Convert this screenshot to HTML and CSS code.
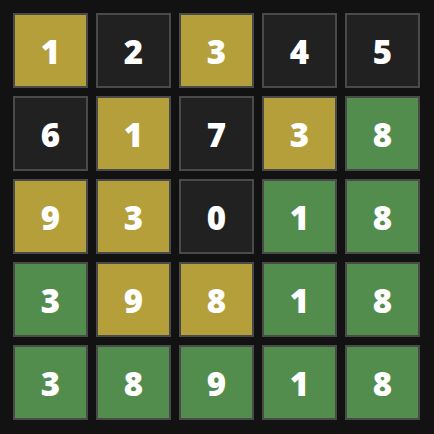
FILE: index.html
```html
<!DOCTYPE html>
<html>
<head>
<meta charset="utf-8">
<link rel="stylesheet" href="styles.css">
</head>
<body>
<div class="board">
  <div class="tile present">1</div><div class="tile absent">2</div><div class="tile present">3</div><div class="tile absent">4</div><div class="tile absent">5</div>
  <div class="tile absent">6</div><div class="tile present">1</div><div class="tile absent">7</div><div class="tile present">3</div><div class="tile correct">8</div>
  <div class="tile present">9</div><div class="tile present">3</div><div class="tile absent">0</div><div class="tile correct">1</div><div class="tile correct">8</div>
  <div class="tile correct">3</div><div class="tile present">9</div><div class="tile present">8</div><div class="tile correct">1</div><div class="tile correct">8</div>
  <div class="tile correct">3</div><div class="tile correct">8</div><div class="tile correct">9</div><div class="tile correct">1</div><div class="tile correct">8</div>
</div>
</body>
</html>
```
FILE: styles.css
```css
html, body {
  margin: 0;
  padding: 0;
  background: #121212;
  width: 434px;
  height: 434px;
  overflow: hidden;
}
.board {
  display: grid;
  grid-template-columns: repeat(5, 75px);
  grid-template-rows: repeat(5, 75px);
  gap: 8px;
  padding: 13px 0 0 13px;
}
.tile {
  box-sizing: border-box;
  border: 2px solid #4a4a4a;
  display: flex;
  align-items: center;
  justify-content: center;
  color: #ffffff;
  font-family: "Open Sans", "Liberation Sans", sans-serif;
  font-weight: 800;
  font-size: 33px;
  padding-top: 1px;
}
.present { background: #b59f3b; }
.correct { background: #538d4e; }
.absent { background: #212121; }
```
